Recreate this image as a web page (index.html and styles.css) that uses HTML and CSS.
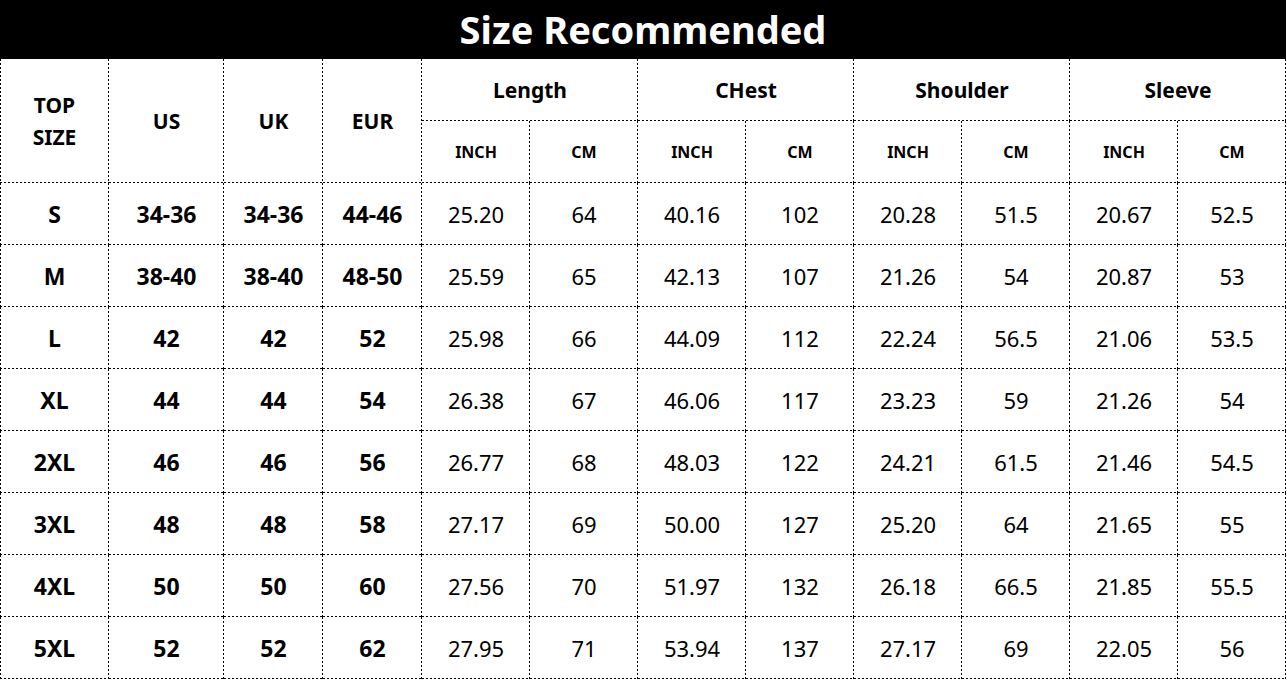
FILE: index.html
```html
<!DOCTYPE html>
<html>
<head>
<meta charset="utf-8">
<link rel="stylesheet" href="styles.css">
</head>
<body>
<div class="title">Size Recommended</div>
<table class="chart">
<colgroup>
<col class="c-size"><col class="c-us"><col class="c-uk"><col class="c-eur">
<col class="c-m"><col class="c-m"><col class="c-m"><col class="c-m">
<col class="c-m"><col class="c-m"><col class="c-m"><col class="c-m">
</colgroup>
<thead>
<tr class="h1">
<th rowspan="2" class="lbl first">TOP<br>SIZE</th>
<th rowspan="2" class="lbl">US</th>
<th rowspan="2" class="lbl">UK</th>
<th rowspan="2" class="lbl">EUR</th>
<th colspan="2" class="grp">Length</th>
<th colspan="2" class="grp">CHest</th>
<th colspan="2" class="grp">Shoulder</th>
<th colspan="2" class="grp">Sleeve</th>
</tr>
<tr class="h2">
<th class="unit">INCH</th><th class="unit">CM</th>
<th class="unit">INCH</th><th class="unit">CM</th>
<th class="unit">INCH</th><th class="unit">CM</th>
<th class="unit">INCH</th><th class="unit">CM</th>
</tr>
</thead>
<tbody>
<tr><td class="b first">S</td><td class="b">34-36</td><td class="b">34-36</td><td class="b">44-46</td><td>25.20</td><td>64</td><td>40.16</td><td>102</td><td>20.28</td><td>51.5</td><td>20.67</td><td>52.5</td></tr>
<tr><td class="b first">M</td><td class="b">38-40</td><td class="b">38-40</td><td class="b">48-50</td><td>25.59</td><td>65</td><td>42.13</td><td>107</td><td>21.26</td><td>54</td><td>20.87</td><td>53</td></tr>
<tr><td class="b first">L</td><td class="b">42</td><td class="b">42</td><td class="b">52</td><td>25.98</td><td>66</td><td>44.09</td><td>112</td><td>22.24</td><td>56.5</td><td>21.06</td><td>53.5</td></tr>
<tr><td class="b first">XL</td><td class="b">44</td><td class="b">44</td><td class="b">54</td><td>26.38</td><td>67</td><td>46.06</td><td>117</td><td>23.23</td><td>59</td><td>21.26</td><td>54</td></tr>
<tr><td class="b first">2XL</td><td class="b">46</td><td class="b">46</td><td class="b">56</td><td>26.77</td><td>68</td><td>48.03</td><td>122</td><td>24.21</td><td>61.5</td><td>21.46</td><td>54.5</td></tr>
<tr><td class="b first">3XL</td><td class="b">48</td><td class="b">48</td><td class="b">58</td><td>27.17</td><td>69</td><td>50.00</td><td>127</td><td>25.20</td><td>64</td><td>21.65</td><td>55</td></tr>
<tr><td class="b first">4XL</td><td class="b">50</td><td class="b">50</td><td class="b">60</td><td>27.56</td><td>70</td><td>51.97</td><td>132</td><td>26.18</td><td>66.5</td><td>21.85</td><td>55.5</td></tr>
<tr><td class="b first">5XL</td><td class="b">52</td><td class="b">52</td><td class="b">62</td><td>27.95</td><td>71</td><td>53.94</td><td>137</td><td>27.17</td><td>69</td><td>22.05</td><td>56</td></tr>
</tbody>
</table>
</body>
</html>
```
FILE: styles.css
```css
html, body {
  margin: 0;
  padding: 0;
  background: #fff;
}
body {
  font-family: "Noto Sans", "Open Sans", sans-serif;
  color: #000;
  width: 1287px;
}
.title {
  background: #000;
  color: #fff;
  width: 1286px;
  height: 59px;
  font-size: 38px;
  font-weight: 700;
  line-height: 59px;
  text-align: center;
}
.chart {
  border-collapse: separate;
  border-spacing: 0;
  table-layout: fixed;
  width: 1286px;
}
.c-size { width: 109px; }
.c-us { width: 115px; }
.c-uk { width: 99px; }
.c-eur { width: 99px; }
.c-m { width: 108px; }
.chart th, .chart td {
  border: none;
  padding: 0;
  text-align: center;
  vertical-align: middle;
  background-image:
    repeating-linear-gradient(to right, #000 0 2px, transparent 2px 4px),
    repeating-linear-gradient(to bottom, #000 0 2px, transparent 2px 4px);
  background-size: 100% 1px, 1px 100%;
  background-position: left bottom, right top;
  background-repeat: no-repeat;
}
.chart th.first, .chart td.first {
  background-image:
    repeating-linear-gradient(to right, #000 0 2px, transparent 2px 4px),
    repeating-linear-gradient(to bottom, #000 0 2px, transparent 2px 4px),
    repeating-linear-gradient(to bottom, #000 0 2px, transparent 2px 4px);
  background-size: 100% 1px, 1px 100%, 1px 100%;
  background-position: left bottom, right top, left top;
}
.h1 { height: 62px; }
.h2 { height: 62px; }
.chart tbody tr { height: 62px; }
.lbl {
  font-size: 21px;
  font-weight: 700;
  line-height: 32px;
}
.grp {
  font-size: 21px;
  font-weight: 700;
}
.unit {
  font-size: 16px;
  font-weight: 700;
}
.chart td {
  font-size: 22px;
  font-weight: 400;
}
.chart td.b {
  font-size: 23px;
  font-weight: 700;
}
```
